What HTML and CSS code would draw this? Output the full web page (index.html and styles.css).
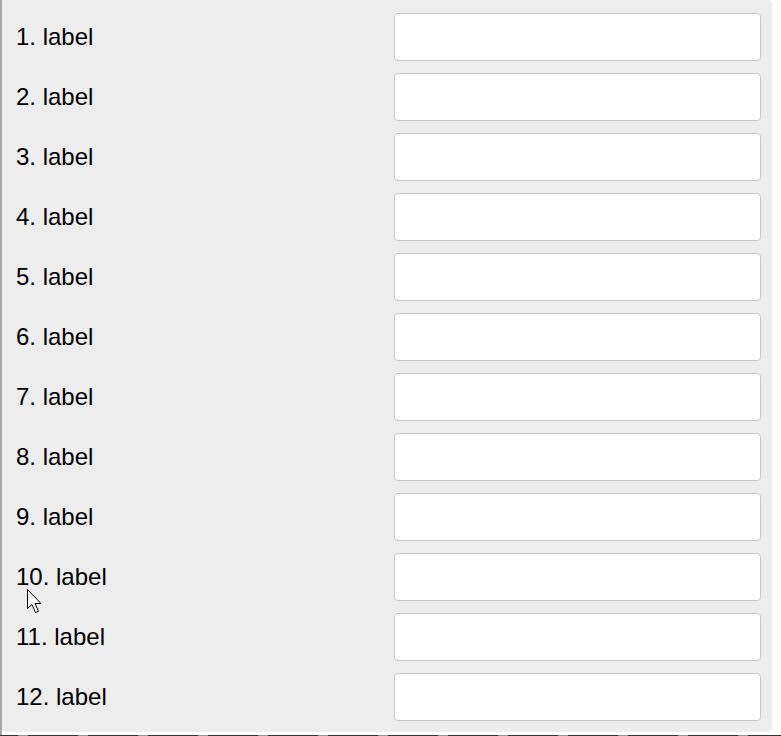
FILE: index.html
```html
<!DOCTYPE html>
<html>
<head>
<meta charset="utf-8">
<link rel="stylesheet" href="styles.css">
</head>
<body>
<div class="frame">
  <form class="panel">
    <div class="row"><label class="label">1. label</label><input class="field" type="text"></div>
    <div class="row"><label class="label">2. label</label><input class="field" type="text"></div>
    <div class="row"><label class="label">3. label</label><input class="field" type="text"></div>
    <div class="row"><label class="label">4. label</label><input class="field" type="text"></div>
    <div class="row"><label class="label">5. label</label><input class="field" type="text"></div>
    <div class="row"><label class="label">6. label</label><input class="field" type="text"></div>
    <div class="row"><label class="label">7. label</label><input class="field" type="text"></div>
    <div class="row"><label class="label">8. label</label><input class="field" type="text"></div>
    <div class="row"><label class="label">9. label</label><input class="field" type="text"></div>
    <div class="row"><label class="label">10. label</label><input class="field" type="text"></div>
    <div class="row"><label class="label">11. label</label><input class="field" type="text"></div>
    <div class="row"><label class="label">12. label</label><input class="field" type="text"></div>
  </form>
</div>
<div class="strip"></div>
<svg class="cursor" width="16" height="25" viewBox="0 0 16 25">
  <path d="M0.5 0.5 L0.5 19.5 L5 15.5 L8.5 23.5 L11.5 22.3 L8 14.5 L14 14.5 Z" fill="#fff" stroke="#000" stroke-width="1" stroke-linejoin="miter"/>
</svg>
</body>
</html>
```
FILE: styles.css
```css
html, body {
  margin: 0;
  padding: 0;
  background: #ffffff;
}
body {
  position: relative;
  font-family: "Liberation Sans", Arial, sans-serif;
}
.frame {
  border-left: 2px solid #a6a6a6;
  height: 735px;
}
.panel {
  box-sizing: border-box;
  width: 770px;
  height: 732px;
  margin: 0;
  background: #ededed;
  border-radius: 0 4px 4px 4px;
  padding: 13px 11px 12px 14px;
  display: flex;
  flex-direction: column;
  gap: 12px;
}
.row {
  display: grid;
  grid-template-columns: 1fr 367px;
  align-items: center;
  height: 48px;
}
.label {
  font-size: 24px;
  color: #000;
  line-height: 28px;
}
.field {
  box-sizing: border-box;
  width: 367px;
  height: 48px;
  margin: 0;
  border: 1px solid #c8c8c8;
  border-radius: 4px;
  background: #fff;
  padding: 0 8px;
  font: inherit;
}
.strip {
  height: 1px;
  width: 781px;
  background: repeating-linear-gradient(90deg, #333 0 18px, #999 18px 28px, #333 28px 60px);
}
.cursor {
  position: absolute;
  left: 27px;
  top: 589px;
}
```
